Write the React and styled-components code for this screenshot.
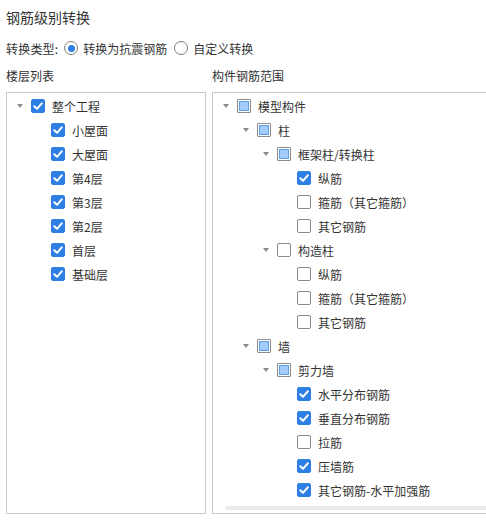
import React from 'react'
import styled, { createGlobalStyle, css } from 'styled-components'

const GlobalStyle = createGlobalStyle`
  html, body {
    margin: 0;
    padding: 0;
    overflow: hidden;
    background: #fff;
  }
  body {
    font-family: "Noto Sans CJK SC", "Noto Sans", sans-serif;
    font-size: 12px;
    color: #333;
  }
`

const Page = styled.div`
  width: 486px;
  height: 527px;
  padding: 7px 0 0 6px;
  box-sizing: border-box;
  overflow: hidden;
`

const Title = styled.div`
  font-size: 14px;
  line-height: 20px;
  color: #333;
`

const TypeRow = styled.div`
  display: flex;
  align-items: center;
  height: 20px;
  margin-top: 11px;
  white-space: nowrap;
`

const TypeLabel = styled.span`
  margin-right: 6px;
  letter-spacing: 0.2px;
`

const RadioOption = styled.label`
  display: flex;
  align-items: center;
  margin-right: 7px;
`

const RadioCircle = styled.span`
  width: 14px;
  height: 14px;
  box-sizing: border-box;
  border: 1px solid #808080;
  border-radius: 50%;
  margin-right: 5px;
  display: flex;
  align-items: center;
  justify-content: center;

  &::after {
    content: '';
    width: 7px;
    height: 7px;
    border-radius: 50%;
    background: ${p => (p.$on ? '#2f7fe6' : 'transparent')};
  }
`

const Columns = styled.div`
  display: flex;
  gap: 6px;
  margin-top: 8px;
`

const Column = styled.div`
  display: flex;
  flex-direction: column;
  flex: none;
  width: ${p => p.$width}px;
`

const ColumnLabel = styled.div`
  line-height: 20px;
  margin-bottom: 6px;
  white-space: nowrap;
`

const Panel = styled.div`
  height: 422px;
  box-sizing: border-box;
  border: 1px solid #c8c8c8;
  display: flex;
  flex-direction: column;
  overflow: hidden;
`

const Tree = styled.div`
  flex: 1;
  padding-top: 1px;
`

const Row = styled.div`
  display: flex;
  align-items: center;
  height: 24px;
  padding-left: ${p => 7 + p.$level * 20}px;
  white-space: nowrap;
`

const Arrow = styled.span`
  width: 12px;
  height: 24px;
  margin-right: 5px;
  flex: none;
  display: flex;
  align-items: center;
  justify-content: center;

  ${p =>
    p.$show &&
    css`
      &::before {
        content: '';
        border-left: 3px solid transparent;
        border-right: 3px solid transparent;
        border-top: 4px solid #8c8c8c;
      }
    `}
`

const Box = styled.span`
  width: 14px;
  height: 14px;
  box-sizing: border-box;
  border-radius: 2px;
  margin-right: 7px;
  flex: none;
  display: flex;
  align-items: center;
  justify-content: center;
  border: 1px solid #8a8a8a;
  background: #fff;

  ${p =>
    p.$state === 'on' &&
    css`
      border-color: #2e7fe4;
      background: #2e7fe4;
    `}

  ${p =>
    p.$state === 'part' &&
    css`
      border-radius: 1px;
      &::after {
        content: '';
        width: 10px;
        height: 10px;
        box-sizing: border-box;
        border: 1px solid #5c9ded;
        background: #a2cbfa;
      }
    `}
`

const ScrollThumb = styled.div`
  height: 4px;
  width: 270px;
  margin: 0 0 3px 12px;
  border-radius: 2px;
  background: #ebebeb;
  flex: none;
`

const Check = () => (
  <svg width='12' height='12' viewBox='0 0 12 12'>
    <path
      d='M2.3 6.2 L5 8.8 L9.8 3.3'
      fill='none'
      stroke='#fff'
      strokeWidth='2'
      strokeLinecap='round'
      strokeLinejoin='round'
    />
  </svg>
)

const TreeRow = ({ level, expand, state, label }) => (
  <Row $level={level}>
    <Arrow $show={expand} />
    <Box $state={state}>{state === 'on' && <Check />}</Box>
    <span>{label}</span>
  </Row>
)

const floors = [
  { level: 0, expand: true, state: 'on', label: '整个工程' },
  { level: 1, state: 'on', label: '小屋面' },
  { level: 1, state: 'on', label: '大屋面' },
  { level: 1, state: 'on', label: '第4层' },
  { level: 1, state: 'on', label: '第3层' },
  { level: 1, state: 'on', label: '第2层' },
  { level: 1, state: 'on', label: '首层' },
  { level: 1, state: 'on', label: '基础层' }
]

const parts = [
  { level: 0, expand: true, state: 'part', label: '模型构件' },
  { level: 1, expand: true, state: 'part', label: '柱' },
  { level: 2, expand: true, state: 'part', label: '框架柱/转换柱' },
  { level: 3, state: 'on', label: '纵筋' },
  { level: 3, state: 'off', label: '箍筋（其它箍筋）' },
  { level: 3, state: 'off', label: '其它钢筋' },
  { level: 2, expand: true, state: 'off', label: '构造柱' },
  { level: 3, state: 'off', label: '纵筋' },
  { level: 3, state: 'off', label: '箍筋（其它箍筋）' },
  { level: 3, state: 'off', label: '其它钢筋' },
  { level: 1, expand: true, state: 'part', label: '墙' },
  { level: 2, expand: true, state: 'part', label: '剪力墙' },
  { level: 3, state: 'on', label: '水平分布钢筋' },
  { level: 3, state: 'on', label: '垂直分布钢筋' },
  { level: 3, state: 'off', label: '拉筋' },
  { level: 3, state: 'on', label: '压墙筋' },
  { level: 3, state: 'on', label: '其它钢筋-水平加强筋' }
]

const App = () => (
  <>
    <GlobalStyle />
    <Page>
      <Title>钢筋级别转换</Title>
      <TypeRow>
        <TypeLabel>转换类型:</TypeLabel>
        <RadioOption>
          <RadioCircle $on />
          转换为抗震钢筋
        </RadioOption>
        <RadioOption>
          <RadioCircle />
          自定义转换
        </RadioOption>
      </TypeRow>
      <Columns>
        <Column $width={200}>
          <ColumnLabel>楼层列表</ColumnLabel>
          <Panel>
            <Tree>
              {floors.map((f, i) => (
                <TreeRow key={i} {...f} />
              ))}
            </Tree>
          </Panel>
        </Column>
        <Column $width={300}>
          <ColumnLabel>构件钢筋范围</ColumnLabel>
          <Panel>
            <Tree>
              {parts.map((p, i) => (
                <TreeRow key={i} {...p} />
              ))}
            </Tree>
            <ScrollThumb />
          </Panel>
        </Column>
      </Columns>
    </Page>
  </>
)

export default App
